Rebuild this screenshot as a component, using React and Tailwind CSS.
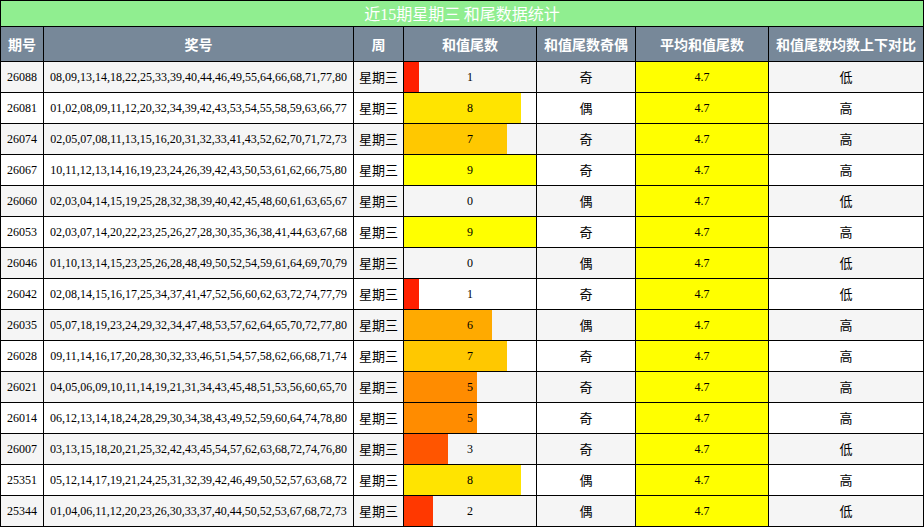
const rows = [
["26088","08,09,13,14,18,22,25,33,39,40,44,46,49,55,64,66,68,71,77,80",1,"奇","低"],
["26081","01,02,08,09,11,12,20,32,34,39,42,43,53,54,55,58,59,63,66,77",8,"偶","高"],
["26074","02,05,07,08,11,13,15,16,20,31,32,33,41,43,52,62,70,71,72,73",7,"奇","高"],
["26067","10,11,12,13,14,16,19,23,24,26,39,42,43,50,53,61,62,66,75,80",9,"奇","高"],
["26060","02,03,04,14,15,19,25,28,32,38,39,40,42,45,48,60,61,63,65,67",0,"偶","低"],
["26053","02,03,07,14,20,22,23,25,26,27,28,30,35,36,38,41,44,63,67,68",9,"奇","高"],
["26046","01,10,13,14,15,23,25,26,28,48,49,50,52,54,59,61,64,69,70,79",0,"偶","低"],
["26042","02,08,14,15,16,17,25,34,37,41,47,52,56,60,62,63,72,74,77,79",1,"奇","低"],
["26035","05,07,18,19,23,24,29,32,34,47,48,53,57,62,64,65,70,72,77,80",6,"偶","高"],
["26028","09,11,14,16,17,20,28,30,32,33,46,51,54,57,58,62,66,68,71,74",7,"奇","高"],
["26021","04,05,06,09,10,11,14,19,21,31,34,43,45,48,51,53,56,60,65,70",5,"奇","高"],
["26014","06,12,13,14,18,24,28,29,30,34,38,43,49,52,59,60,64,74,78,80",5,"奇","高"],
["26007","03,13,15,18,20,21,25,32,42,43,45,54,57,62,63,68,72,74,76,80",3,"奇","低"],
["25351","05,12,14,17,19,21,24,25,31,32,39,42,46,49,50,52,57,63,68,72",8,"偶","高"],
["25344","01,04,06,11,12,20,23,26,30,33,37,40,44,50,52,53,67,68,72,73",2,"偶","低"],
];
const colors = {1:"#ff2000",2:"#ff3800",3:"#ff5500",4:"#ff7000",5:"#ff8c00",6:"#ffaa00",7:"#ffc800",8:"#ffe400",9:"#ffff00"};
const serif = {fontFamily:'"Liberation Serif","Noto Sans CJK SC",serif'};
export default function App(){
  return (
    <div className="w-[924px] h-[527px] overflow-hidden bg-white text-[13px] text-black" style={{fontFamily:'"Noto Sans CJK SC",sans-serif'}}>
      <table className="border-collapse w-[924px] table-fixed">
        <colgroup>
          <col className="w-[43px]"/><col className="w-[310px]"/><col className="w-[50px]"/><col className="w-[133px]"/><col className="w-[99px]"/><col className="w-[133px]"/><col/>
        </colgroup>
        <thead>
          <tr className="h-[26px]"><th colSpan={7} className="border border-black bg-[#90ee90] text-white font-normal text-[16px] leading-none">近<span style={serif}>15</span>期星期三 和尾数据统计</th></tr>
          <tr className="h-[35px] bg-[#778899] text-white text-[14px] font-bold">
            {["期号","奖号","周","和值尾数","和值尾数奇偶","平均和值尾数","和值尾数均数上下对比"].map(h=>(<th key={h} className="border border-black font-bold whitespace-nowrap">{h}</th>))}
          </tr>
        </thead>
        <tbody>
          {rows.map((r,i)=>(
            <tr key={r[0]} className={"h-[31px] "+(i%2===0?"bg-[#f5f5f5]":"bg-white")}>
              <td className="border border-black text-center text-[12px]" style={serif}>{r[0]}</td>
              <td className="border border-black text-center text-[12px]" style={serif}>{r[1]}</td>
              <td className="border border-black text-center">星期三</td>
              <td className="border border-black p-0 relative">
                <div className="absolute left-0 top-0 bottom-0" style={{width:`${r[2]/9*100}%`,background:colors[r[2]]||"transparent"}}/>
                <div className="relative text-center text-[12px]" style={serif}>{r[2]}</div>
              </td>
              <td className="border border-black text-center">{r[3]}</td>
              <td className="border border-black text-center bg-[#ffff00] text-[12px]" style={serif}>4.7</td>
              <td className="border border-black text-center">{r[4]}</td>
            </tr>
          ))}
        </tbody>
      </table>
    </div>
  );
}
